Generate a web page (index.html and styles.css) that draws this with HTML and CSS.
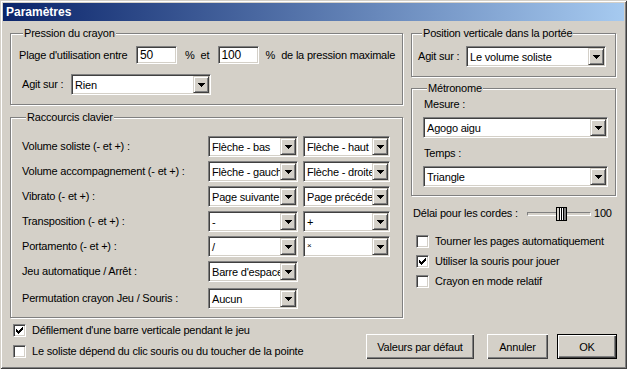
FILE: index.html
```html
<!doctype html>
<html>
 <head>
  <meta charset="utf-8">
  <link rel="stylesheet" href="styles.css">
 </head>
 <body>
  <div class="window">
   <div class="titlebar">Paramètres</div>
   <div class="content">
    <div class="main">
     <div class="col-left">
      <fieldset class="group group-pression">
       <legend>Pression du crayon</legend>
       <div class="row-plage">
        <span class="lbl-plage">Plage d'utilisation entre</span>
        <div class="edit">50</div>
        <span class="pct">%</span><span class="pct-et">et</span>
        <div class="edit">100</div>
        <span class="pct pct-2">%</span><span class="pct-de">de la pression maximale</span>
       </div>
       <div class="row-agit">
        <span class="lbl-agit">Agit sur :</span>
        <div class="combo combo-mid"><span class="combo-text">Rien</span><span class="combo-btn"><svg width="7" height="4"><path d="M0 0h7v1h-1v1h-1v1h-1v1h-1v-1h-1v-1h-1v-1h-1z"/></svg></span></div>
       </div>
      </fieldset>

      <fieldset class="group group-raccourcis">
       <legend>Raccourcis clavier</legend>
       <div class="keys">
        <div class="key-row">
         <span class="key-lbl">Volume soliste (- et +) :</span>
         <div class="combo combo-k1"><span class="combo-text">Flèche - bas</span><span class="combo-btn"><svg width="7" height="4"><path d="M0 0h7v1h-1v1h-1v1h-1v1h-1v-1h-1v-1h-1v-1h-1z"/></svg></span></div>
         <div class="combo combo-k2"><span class="combo-text">Flèche - haut</span><span class="combo-btn"><svg width="7" height="4"><path d="M0 0h7v1h-1v1h-1v1h-1v1h-1v-1h-1v-1h-1v-1h-1z"/></svg></span></div>
        </div>
        <div class="key-row">
         <span class="key-lbl">Volume accompagnement (- et +) :</span>
         <div class="combo combo-k1"><span class="combo-text">Flèche - gauche</span><span class="combo-btn"><svg width="7" height="4"><path d="M0 0h7v1h-1v1h-1v1h-1v1h-1v-1h-1v-1h-1v-1h-1z"/></svg></span></div>
         <div class="combo combo-k2"><span class="combo-text">Flèche - droite</span><span class="combo-btn"><svg width="7" height="4"><path d="M0 0h7v1h-1v1h-1v1h-1v1h-1v-1h-1v-1h-1v-1h-1z"/></svg></span></div>
        </div>
        <div class="key-row">
         <span class="key-lbl">Vibrato (- et +) :</span>
         <div class="combo combo-k1"><span class="combo-text">Page suivante</span><span class="combo-btn"><svg width="7" height="4"><path d="M0 0h7v1h-1v1h-1v1h-1v1h-1v-1h-1v-1h-1v-1h-1z"/></svg></span></div>
         <div class="combo combo-k2"><span class="combo-text">Page précédente</span><span class="combo-btn"><svg width="7" height="4"><path d="M0 0h7v1h-1v1h-1v1h-1v1h-1v-1h-1v-1h-1v-1h-1z"/></svg></span></div>
        </div>
        <div class="key-row">
         <span class="key-lbl">Transposition (- et +) :</span>
         <div class="combo combo-k1"><span class="combo-text">-</span><span class="combo-btn"><svg width="7" height="4"><path d="M0 0h7v1h-1v1h-1v1h-1v1h-1v-1h-1v-1h-1v-1h-1z"/></svg></span></div>
         <div class="combo combo-k2"><span class="combo-text">+</span><span class="combo-btn"><svg width="7" height="4"><path d="M0 0h7v1h-1v1h-1v1h-1v1h-1v-1h-1v-1h-1v-1h-1z"/></svg></span></div>
        </div>
        <div class="key-row">
         <span class="key-lbl">Portamento (- et +) :</span>
         <div class="combo combo-k1"><span class="combo-text">/</span><span class="combo-btn"><svg width="7" height="4"><path d="M0 0h7v1h-1v1h-1v1h-1v1h-1v-1h-1v-1h-1v-1h-1z"/></svg></span></div>
         <div class="combo combo-k2"><span class="combo-text combo-small">×</span><span class="combo-btn"><svg width="7" height="4"><path d="M0 0h7v1h-1v1h-1v1h-1v1h-1v-1h-1v-1h-1v-1h-1z"/></svg></span></div>
        </div>
        <div class="key-row">
         <span class="key-lbl">Jeu automatique / Arrêt :</span>
         <div class="combo combo-k1"><span class="combo-text">Barre d'espace</span><span class="combo-btn"><svg width="7" height="4"><path d="M0 0h7v1h-1v1h-1v1h-1v1h-1v-1h-1v-1h-1v-1h-1z"/></svg></span></div>
        </div>
        <div class="key-row key-row-last">
         <span class="key-lbl">Permutation crayon Jeu / Souris :</span>
         <div class="combo combo-k1"><span class="combo-text">Aucun</span><span class="combo-btn"><svg width="7" height="4"><path d="M0 0h7v1h-1v1h-1v1h-1v1h-1v-1h-1v-1h-1v-1h-1z"/></svg></span></div>
        </div>
       </div>
      </fieldset>
     </div>

     <div class="col-right">
      <fieldset class="group group-position">
       <legend>Position verticale dans la portée</legend>
       <div class="row-agit row-agit-r">
        <span class="lbl-agit">Agit sur :</span>
        <div class="combo combo-mid"><span class="combo-text">Le volume soliste</span><span class="combo-btn"><svg width="7" height="4"><path d="M0 0h7v1h-1v1h-1v1h-1v1h-1v-1h-1v-1h-1v-1h-1z"/></svg></span></div>
       </div>
      </fieldset>

      <fieldset class="group group-metronome">
       <legend>Métronome</legend>
       <div class="metro">
        <span class="metro-lbl">Mesure :</span>
        <div class="combo combo-wide"><span class="combo-text">Agogo aigu</span><span class="combo-btn"><svg width="7" height="4"><path d="M0 0h7v1h-1v1h-1v1h-1v1h-1v-1h-1v-1h-1v-1h-1z"/></svg></span></div>
        <span class="metro-lbl metro-lbl-2">Temps :</span>
        <div class="combo combo-wide"><span class="combo-text">Triangle</span><span class="combo-btn"><svg width="7" height="4"><path d="M0 0h7v1h-1v1h-1v1h-1v1h-1v-1h-1v-1h-1v-1h-1z"/></svg></span></div>
       </div>
      </fieldset>

      <div class="slider-row">
       <span class="slider-lbl">Délai pour les cordes :</span>
       <div class="slider">
        <div class="track"></div>
        <svg class="thumb" width="11" height="14" viewBox="0 0 11 14"><rect x="0.5" y="0.5" width="10" height="13" fill="#fff" stroke="#000"/><path d="M3 1h1v12h-1z M5 1h1v12h-1z M7 1h1v12h-1z" fill="#000"/><path d="M1 1h2v12h-2z" fill="#d4d0c8"/><path d="M8 1h2v12h-2z" fill="#808080"/></svg>
       </div>
       <span class="slider-val">100</span>
      </div>

      <div class="checks-right">
       <div class="check-row"><span class="check-box"></span><span>Tourner les pages automatiquement</span></div>
       <div class="check-row"><span class="check-box"><svg width="7" height="7"><path d="M0 2h1v3h-1z M1 3h1v3h-1z M2 4h1v3h-1z M3 3h1v3h-1z M4 2h1v3h-1z M5 1h1v3h-1z M6 0h1v3h-1z"/></svg></span><span>Utiliser la souris pour jouer</span></div>
       <div class="check-row"><span class="check-box"></span><span>Crayon en mode relatif</span></div>
      </div>
     </div>
    </div>

    <div class="footer">
     <div class="checks-left">
      <div class="check-row"><span class="check-box"><svg width="7" height="7"><path d="M0 2h1v3h-1z M1 3h1v3h-1z M2 4h1v3h-1z M3 3h1v3h-1z M4 2h1v3h-1z M5 1h1v3h-1z M6 0h1v3h-1z"/></svg></span><span>Défilement d'une barre verticale pendant le jeu</span></div>
      <div class="check-row"><span class="check-box"></span><span>Le soliste dépend du clic souris ou du toucher de la pointe</span></div>
     </div>
     <div class="buttons">
      <button class="btn btn-defaut">Valeurs par défaut</button>
      <button class="btn btn-annuler">Annuler</button>
      <button class="btn btn-ok">OK</button>
     </div>
    </div>
   </div>
  </div>
 </body>
</html>
```

FILE: styles.css
```css
body {
    margin: 0;
    background: #d4d0c8;
    font-family: "Liberation Sans", Arial, sans-serif;
    font-size: 11px;
    line-height: 13px;
    letter-spacing: -0.2px;
    white-space: nowrap;
    color: #000;
}

/* fenêtre style Windows classique */
.window {
    width: 627px;
    height: 369px;
    box-sizing: border-box;
    padding: 3px;
    background: #d4d0c8;
    box-shadow: inset 1px 1px 0 #d4d0c8, inset -1px -1px 0 #404040,
                inset 2px 2px 0 #fff, inset -2px -2px 0 #808080;
}
.titlebar {
    height: 18px;
    line-height: 18px;
    padding-left: 3px;
    background: linear-gradient(to right, #0a246a, #a6caf0);
    color: #fff;
    font-weight: bold;
    font-size: 12px;
    letter-spacing: 0;
}
.content {
    padding: 6px 7px 0 7px;
}
.main {
    display: flex;
    gap: 8px;
}
.col-left {
    width: 393px;
    display: flex;
    flex-direction: column;
}
.col-right {
    width: 205px;
    display: flex;
    flex-direction: column;
}

/* cadres (group box) */
.group {
    margin: 0;
    padding: 0;
    min-width: 0;
    border: 1px solid #808080;
    box-shadow: inset 1px 1px 0 #fff, 1px 1px 0 #fff;
}
.group legend {
    margin-left: 4px;
    padding: 0 1px;
    background: #d4d0c8;
    line-height: 13px;
}
.group-pression {
    height: 78px;
    box-sizing: border-box;
    padding: 0 0 0 8px;
}
.group-raccourcis {
    margin-top: 6px;
    height: 207px;
    box-sizing: border-box;
    padding: 0 0 0 11px;
}
.group-position {
    height: 50px;
    box-sizing: border-box;
    padding: 0 0 0 6px;
}
.group-metronome {
    margin-top: 5px;
    height: 114px;
    box-sizing: border-box;
    padding: 0 0 0 11px;
}

/* Pression du crayon */
.row-plage {
    display: flex;
    align-items: center;
    margin-top: 6px;
    height: 18px;
}
.lbl-plage {
    width: 117px;
}
.pct {
    margin-left: 8px;
}
.pct-et {
    margin-left: 6px;
    width: 17px;
}
.pct-2 {
    margin-left: 7px;
}
.pct-de {
    margin-left: 6px;
}
.row-agit {
    display: flex;
    align-items: center;
    margin-top: 10px;
    padding-left: 3px;
}
.row-agit-r {
    margin-top: 6px;
    padding-left: 0;
}
.lbl-agit {
    width: 49px;
}
.row-agit-r .lbl-agit {
    width: 48px;
}

/* champs */
.edit {
    width: 41px;
    height: 18px;
    box-sizing: border-box;
    padding: 2px 0 0 3px;
    background: #fff;
    border: 1px solid;
    border-color: #808080 #fff #fff #808080;
    box-shadow: inset 1px 1px 0 #404040, inset -1px -1px 0 #d4d0c8;
    line-height: 13px;
    font-size: 12px;
}
.combo {
    display: flex;
    height: 21px;
    box-sizing: border-box;
    padding: 2px;
    background: #fff;
    border: 1px solid;
    border-color: #808080 #fff #fff #808080;
    box-shadow: inset 1px 1px 0 #404040, inset -1px -1px 0 #d4d0c8;
}
.combo-text {
    flex: 1;
    min-width: 0;
    overflow: hidden;
    padding: 2px 0 0 1px;
    margin-top: -1px;
    line-height: 15px;
}
.combo-small {
    font-size: 8px;
    line-height: 12px;
}
.combo-btn {
    width: 16px;
    height: 17px;
    margin: -1px -1px 0 0;
    box-sizing: border-box;
    display: flex;
    align-items: center;
    justify-content: center;
    background: #d4d0c8;
    border: 1px solid;
    border-color: #d4d0c8 #404040 #404040 #d4d0c8;
    box-shadow: inset 1px 1px 0 #fff, inset -1px -1px 0 #808080;
    flex: none;
}
.combo-btn svg {
    display: block;
    margin-left: 1px;
}
.combo-mid {
    width: 140px;
}
.combo-wide {
    width: 185px;
}
.combo-k1 {
    width: 90px;
}
.combo-k2 {
    width: 87px;
    margin-left: 5px;
}

/* Raccourcis clavier */
.keys {
    padding-top: 12px;
    display: flex;
    flex-direction: column;
    gap: 4px;
}
.key-row {
    display: flex;
    align-items: center;
}
.key-row-last {
    margin-top: 2px;
}
.key-lbl {
    width: 186px;
}

/* Métronome */
.metro {
    display: flex;
    flex-direction: column;
    align-items: flex-start;
}
.metro-lbl {
    margin-top: 3px;
    margin-bottom: 6px;
    padding-left: 1px;
}
.metro-lbl-2 {
    margin-top: 9px;
}

/* curseur */
.slider-row {
    display: flex;
    align-items: center;
    margin-top: 7px;
    height: 21px;
    padding-left: 2px;
}
.slider-lbl {
    width: 114px;
}
.slider {
    position: relative;
    width: 64px;
    height: 14px;
    display: flex;
    align-items: center;
}
.track {
    width: 64px;
    height: 4px;
    box-sizing: border-box;
    border: 1px solid;
    border-color: #808080 #fff #fff #808080;
    background: #d4d0c8;
}
.thumb {
    position: absolute;
    left: 29px;
    top: 0;
}
.slider-val {
    margin-left: 3px;
}

/* cases à cocher */
.check-box {
    width: 13px;
    height: 13px;
    box-sizing: border-box;
    padding: 2px;
    margin-right: 6px;
    background: #fff;
    border: 1px solid;
    border-color: #808080 #fff #fff #808080;
    box-shadow: inset 1px 1px 0 #404040, inset -1px -1px 0 #d4d0c8;
    flex: none;
}
.check-box svg {
    display: block;
}
.check-row {
    display: flex;
    align-items: center;
    height: 20px;
}
.checks-right {
    margin-top: 7px;
    padding-left: 5px;
}

/* bas de la fenêtre */
.footer {
    display: flex;
    justify-content: space-between;
}
.checks-left {
    margin-top: 2px;
    padding-left: 3px;
}
.checks-left .check-row {
    height: 21px;
}
.buttons {
    display: flex;
    margin-top: 16px;
}
.btn {
    height: 25px;
    padding: 0;
    margin: 0;
    border: none;
    background: #d4d0c8;
    font-family: inherit;
    font-size: 11px;
    letter-spacing: -0.2px;
    color: #000;
    box-shadow: inset 1px 1px 0 #fff, inset -1px -1px 0 #404040, inset -2px -2px 0 #808080;
}
.btn-defaut {
    width: 108px;
}
.btn-annuler {
    width: 61px;
    margin-left: 13px;
}
.btn-ok {
    width: 60px;
    margin-left: 9px;
    border: 1px solid #000;
}
```
